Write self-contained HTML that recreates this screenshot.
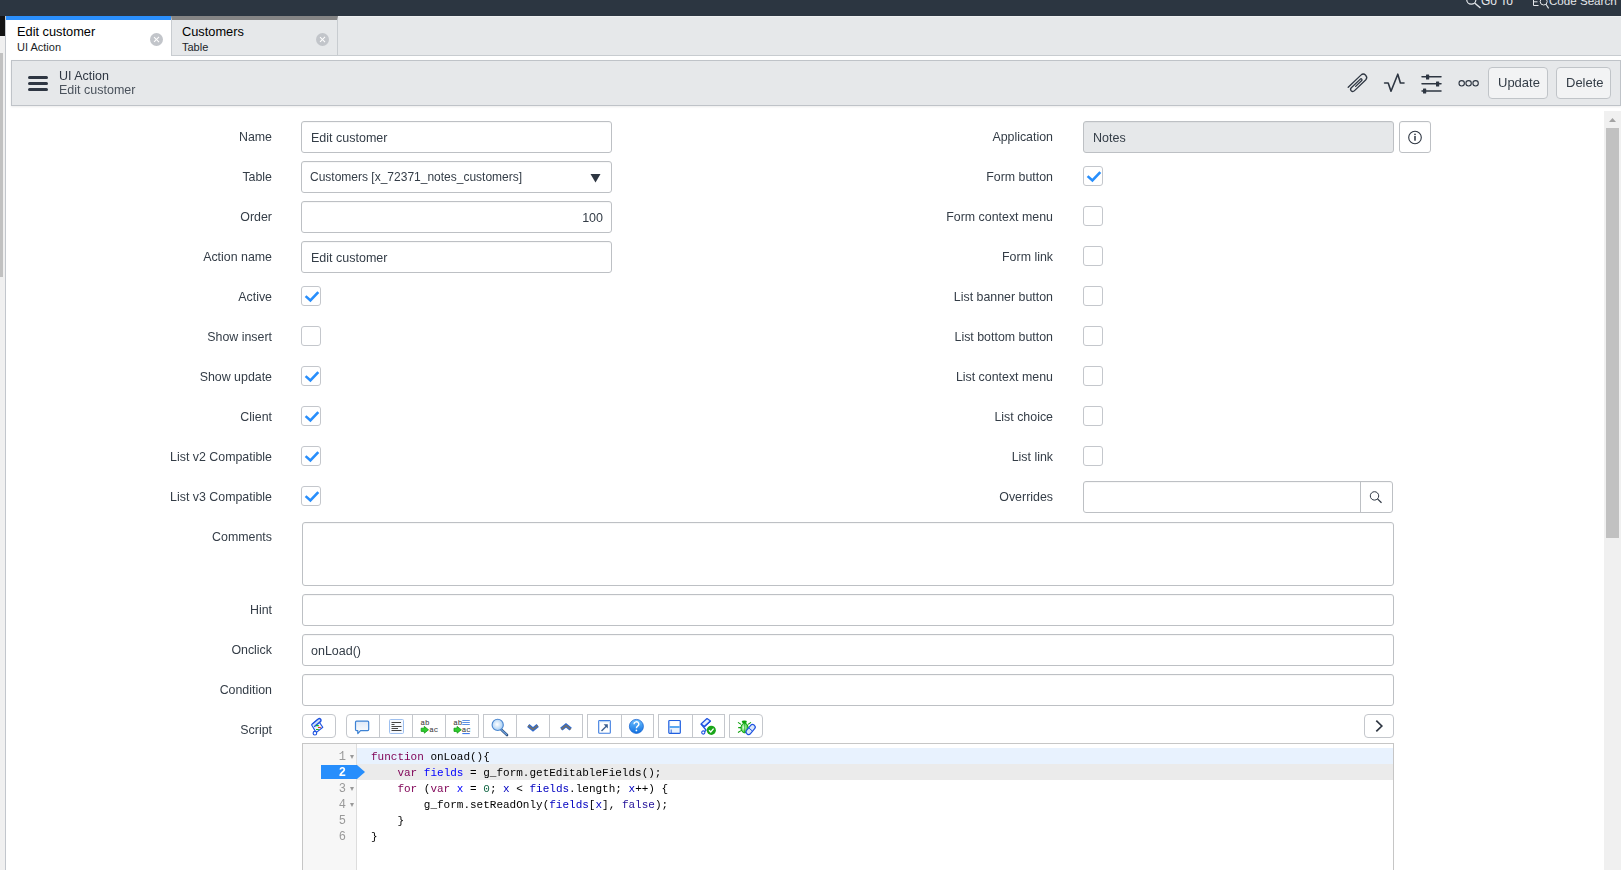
<!DOCTYPE html>
<html><head><meta charset="utf-8">
<style>
*{box-sizing:border-box;margin:0;padding:0}
html,body{width:1621px;height:870px;overflow:hidden;background:#fff;font-family:"Liberation Sans",sans-serif;color:#343d47}
.a{position:absolute}
#topbar{left:0;top:0;width:1621px;height:16px;background:#2c3641}
#leftblk{left:0;top:16px;width:5px;height:20px;background:#141414}
#lefttrack{left:0;top:36px;width:5px;height:834px;background:#f0f0f0}
#leftthumb{left:0;top:53px;width:3px;height:224px;background:#c1c1c1}
#leftline{left:5px;top:16px;width:1px;height:854px;background:#c2c6cc}
#tabbar{left:6px;top:16px;width:1615px;height:40px;background:#e6e8ea;border-bottom:1px solid #c8ccd0;border-top:1px solid #eef0f1}
.tab{top:16px;height:40px}
.tab .t1{position:absolute;left:11px;top:7px;font-size:12.5px;color:#000;white-space:nowrap}
.tab .t2{position:absolute;left:11px;top:24px;font-size:10.5px;color:#1b1f29;white-space:nowrap}
.tab .x{position:absolute;width:13px;height:13px;border-radius:50%;background:#c2c5ca;top:17px}
.tab .x:before,.tab .x:after{content:"";position:absolute;left:6px;top:3px;width:1.3px;height:7px;background:#fff;transform:rotate(45deg)}
.tab .x:after{transform:rotate(-45deg)}
#header{left:11px;top:60px;width:1610px;height:46px;background:#e6e8ea;border:1px solid #bfc3c8;box-shadow:0 1px 2px rgba(0,0,0,.08)}
.lbl{position:absolute;will-change:transform;font-size:12.4px;color:#343d47;white-space:nowrap;text-align:right}
.inp{position:absolute;will-change:transform;height:32px;border:1px solid #bdc0c4;border-radius:3px;background:#fff;box-shadow:inset 0 1px 1px rgba(0,0,0,.035);font-size:12.5px;color:#343d47;white-space:nowrap}
.cb{position:absolute;width:20px;height:20px;border:1px solid #c4c7cc;border-radius:3px;background:#fff}
.btn{position:absolute;will-change:transform;top:7px;height:32px;border:1px solid #c0c4c8;border-radius:4px;background:#f2f3f4;font-size:13px;color:#343d47;white-space:nowrap}
#vscroll{left:1604px;top:111px;width:17px;height:759px;background:#f0f0f0}
#vthumb{left:1606px;top:128px;width:13px;height:410px;background:#c1c1c1}
</style></head><body>
<div class="a" id="topbar"></div>
<div class="a" style="left:1481px;top:-6px;font-size:12px;color:#e4e7ea;white-space:nowrap">Go To</div>
<div class="a" style="left:1549px;top:-6px;font-size:11.6px;color:#e4e7ea;white-space:nowrap">Code Search</div>
<svg class="a" style="left:1460px;top:0" width="100" height="16" viewBox="1460 0 100 16">
 <g fill="none" stroke="#e4e7ea" stroke-width="1.2">
  <circle cx="1471.3" cy="-0.5" r="4.6"/><path d="M1474.6 3 L1480.5 8" stroke-width="1.4"/>
  <path stroke-width="1" d="M1538.5 -2 H1533.5 V5.5 H1538.5 M1533.5 1.8 H1537.5"/>
  <circle cx="1543.7" cy="1.5" r="3.5" stroke-width="1"/><path d="M1546 4.3 L1548.6 8.4" stroke-width="1.1"/>
 </g>
</svg>
<div class="a" id="leftblk"></div>
<div class="a" id="lefttrack"></div>
<div class="a" id="leftthumb"></div>
<div class="a" id="leftline"></div>
<div class="a" id="tabbar"></div>
<!-- tabs -->
<div class="a tab" style="left:6px;width:165px;background:#fff;border-top:4px solid #2b8ffc">
  <div class="t1" style="top:4px;font-size:12.8px">Edit customer</div>
  <div class="t2" style="top:21px;font-size:11px">UI Action</div>
  <div class="x" style="left:144px;top:13px"></div>
</div>
<div class="a tab" style="left:171px;width:167px;background:#e6e8ea;border-top:4px solid #858585;border-left:1px solid #c8ccd0;border-right:1px solid #c8ccd0;border-bottom:1px solid #c8ccd0">
  <div class="t1" style="left:10px;top:4px;font-size:12.8px">Customers</div>
  <div class="t2" style="left:10px;top:21px;font-size:11px">Table</div>
  <div class="x" style="left:144px;top:13px"></div>
</div>
<div class="a" id="header"></div>
<div class="a" style="left:28px;top:76px;width:20px;height:3px;border-radius:1.5px;background:#2e3642"></div>
<div class="a" style="left:28px;top:82px;width:20px;height:3px;border-radius:1.5px;background:#2e3642"></div>
<div class="a" style="left:28px;top:88px;width:20px;height:3px;border-radius:1.5px;background:#2e3642"></div>
<div class="a" style="will-change:transform;left:59px;top:69px;font-size:12.5px;color:#2e3642;white-space:nowrap">UI Action</div>
<div class="a" style="will-change:transform;left:59px;top:83px;font-size:12.5px;color:#4a525c;white-space:nowrap">Edit customer</div>
<svg class="a" style="left:1340px;top:60px" width="150" height="46" viewBox="0 0 150 46">
 <g fill="none" stroke="#2e3642" stroke-width="1.6" stroke-linecap="round" stroke-linejoin="round">
  <path stroke-width="1.3" d="M8.20 27.30 L20.91 15.12 A3.4 3.4 0 0 1 25.61 20.03 L14.28 30.89 A2.15 2.15 0 0 1 11.30 27.79 L20.33 19.14 A1 1 0 0 1 21.71 20.59 L15.65 26.40"/>
  <path d="M44.6 23 H48.2 L51 31.3 L57.8 14.2 L60.4 23 H64"/>
  <path stroke-width="1.5" d="M82 16.8 H101 M82 23.7 H101 M82 31.1 H101"/>
 </g>
 <g fill="#2e3642">
  <rect x="86" y="14.5" width="3.2" height="5" rx="0.5"/>
  <rect x="96" y="21.5" width="3.2" height="5" rx="0.5"/>
  <rect x="83" y="28.5" width="3.2" height="5" rx="0.5"/>
 </g>
 <g fill="none" stroke="#2e3642" stroke-width="1.1">
  <circle cx="121.7" cy="23.3" r="2.7"/><circle cx="128.6" cy="23.3" r="2.7"/><circle cx="135.6" cy="23.3" r="2.7"/>
 </g>
</svg>
<div class="btn" style="left:1488px;top:67px;width:60px;"><span class="a" style="left:9px;top:7px">Update</span></div>
<div class="btn" style="left:1556px;top:67px;width:55px;"><span class="a" style="left:9px;top:7px">Delete</span></div>
<div class="lbl" style="left:0;width:272px;top:130px">Name</div>
<div class="lbl" style="left:0;width:272px;top:170px">Table</div>
<div class="lbl" style="left:0;width:272px;top:210px">Order</div>
<div class="lbl" style="left:0;width:272px;top:250px">Action name</div>
<div class="lbl" style="left:0;width:272px;top:290px">Active</div>
<div class="lbl" style="left:0;width:272px;top:330px">Show insert</div>
<div class="lbl" style="left:0;width:272px;top:370px">Show update</div>
<div class="lbl" style="left:0;width:272px;top:410px">Client</div>
<div class="lbl" style="left:0;width:272px;top:450px">List v2 Compatible</div>
<div class="lbl" style="left:0;width:272px;top:490px">List v3 Compatible</div>
<div class="lbl" style="left:0;width:1053px;top:130px">Application</div>
<div class="lbl" style="left:0;width:1053px;top:170px">Form button</div>
<div class="lbl" style="left:0;width:1053px;top:210px">Form context menu</div>
<div class="lbl" style="left:0;width:1053px;top:250px">Form link</div>
<div class="lbl" style="left:0;width:1053px;top:290px">List banner button</div>
<div class="lbl" style="left:0;width:1053px;top:330px">List bottom button</div>
<div class="lbl" style="left:0;width:1053px;top:370px">List context menu</div>
<div class="lbl" style="left:0;width:1053px;top:410px">List choice</div>
<div class="lbl" style="left:0;width:1053px;top:450px">List link</div>
<div class="lbl" style="left:0;width:1053px;top:490px">Overrides</div>
<div class="inp" style="left:301px;top:121px;width:311px"><span class="a" style="left:9px;top:9px">Edit customer</span></div>
<div class="inp" style="left:301px;top:161px;width:311px"><span class="a" style="left:8px;top:8px;font-size:12px">Customers [x_72371_notes_customers]</span><svg class="a" style="left:287px;top:11px" width="13" height="11"><path d="M1.5 1 H11.5 L6.5 9.5 Z" fill="#2e3642"/></svg></div>
<div class="inp" style="left:301px;top:201px;width:311px"><span class="a" style="right:8px;top:9px">100</span></div>
<div class="inp" style="left:301px;top:241px;width:311px"><span class="a" style="left:9px;top:9px">Edit customer</span></div>
<div class="cb" style="left:301px;top:286px"></div>
<svg class="a" style="left:301px;top:286px" width="20" height="20"><path d="M4.6 10.1 L9.4 14.4 L17.3 6.1" fill="none" stroke="#278efc" stroke-width="2.6"/></svg>
<div class="cb" style="left:301px;top:326px"></div>
<div class="cb" style="left:301px;top:366px"></div>
<svg class="a" style="left:301px;top:366px" width="20" height="20"><path d="M4.6 10.1 L9.4 14.4 L17.3 6.1" fill="none" stroke="#278efc" stroke-width="2.6"/></svg>
<div class="cb" style="left:301px;top:406px"></div>
<svg class="a" style="left:301px;top:406px" width="20" height="20"><path d="M4.6 10.1 L9.4 14.4 L17.3 6.1" fill="none" stroke="#278efc" stroke-width="2.6"/></svg>
<div class="cb" style="left:301px;top:446px"></div>
<svg class="a" style="left:301px;top:446px" width="20" height="20"><path d="M4.6 10.1 L9.4 14.4 L17.3 6.1" fill="none" stroke="#278efc" stroke-width="2.6"/></svg>
<div class="cb" style="left:301px;top:486px"></div>
<svg class="a" style="left:301px;top:486px" width="20" height="20"><path d="M4.6 10.1 L9.4 14.4 L17.3 6.1" fill="none" stroke="#278efc" stroke-width="2.6"/></svg>
<div class="inp" style="left:1083px;top:121px;width:311px;background:#e6e8ea"><span class="a" style="left:9px;top:9px">Notes</span></div>
<div class="inp" style="left:1399px;top:121px;width:32px"><svg class="a" style="left:7px;top:7px" width="18" height="18"><circle cx="8" cy="8.5" r="6.3" fill="none" stroke="#2e3642" stroke-width="1.1"/><rect x="7.25" y="4.7" width="1.5" height="1.4" fill="#2e3642"/><rect x="7.25" y="7" width="1.5" height="4.7" fill="#2e3642"/></svg></div>
<div class="cb" style="left:1083px;top:166px"></div>
<svg class="a" style="left:1083px;top:166px" width="20" height="20"><path d="M4.6 10.1 L9.4 14.4 L17.3 6.1" fill="none" stroke="#278efc" stroke-width="2.6"/></svg>
<div class="cb" style="left:1083px;top:206px"></div>
<div class="cb" style="left:1083px;top:246px"></div>
<div class="cb" style="left:1083px;top:286px"></div>
<div class="cb" style="left:1083px;top:326px"></div>
<div class="cb" style="left:1083px;top:366px"></div>
<div class="cb" style="left:1083px;top:406px"></div>
<div class="cb" style="left:1083px;top:446px"></div>
<div class="inp" style="left:1083px;top:481px;width:310px"><div class="a" style="left:276px;top:0;width:1px;height:30px;background:#bdc0c4"></div><svg class="a" style="left:284px;top:8px" width="16" height="16"><circle cx="6.5" cy="5.9" r="4.2" fill="none" stroke="#2e3642" stroke-width="1"/><path d="M9.5 8.9 L13.5 12.7" stroke="#2e3642" stroke-width="1.2"/></svg></div>
<div class="lbl" style="left:0;width:272px;top:530px">Comments</div>
<div class="inp" style="left:302px;top:522px;width:1092px;height:64px"></div>
<div class="lbl" style="left:0;width:272px;top:603px">Hint</div>
<div class="inp" style="left:302px;top:594px;width:1092px;height:32px"></div>
<div class="lbl" style="left:0;width:272px;top:643px">Onclick</div>
<div class="inp" style="left:302px;top:634px;width:1092px;height:32px"><span class="a" style="left:8px;top:9px">onLoad()</span></div>
<div class="lbl" style="left:0;width:272px;top:683px">Condition</div>
<div class="inp" style="left:302px;top:674px;width:1092px;height:32px"></div>
<div class="lbl" style="left:0;width:272px;top:723px">Script</div>

<!-- script toolbar -->
<style>
.tb{position:absolute;top:714px;height:24px;border:1px solid #c4c7cc;border-radius:3px;background:#fff}
.tbd{position:absolute;top:0;width:1px;height:22px;background:#c4c7cc}
.ed{font-family:"Liberation Mono",monospace;font-size:11px;white-space:pre;line-height:16px}
.kw{color:#7f0055}.v2{color:#0000c0}.df{color:#0000ff}.nm{color:#116644}.at{color:#221199}
.ln{position:absolute;left:0;width:43px;text-align:right;color:#999;font-family:"Liberation Mono",monospace;font-size:12px;line-height:16px}
.fold{position:absolute;left:46.5px;width:0;height:0;border-left:2.5px solid transparent;border-right:2.5px solid transparent;border-top:4px solid #999}
</style>
<div class="tb" style="left:302px;width:34px;border-radius:4px"></div>
<div class="tb" style="left:346px;width:133px;border-radius:4px 0 0 4px"><div class="tbd" style="left:32px"></div><div class="tbd" style="left:65px"></div><div class="tbd" style="left:98px"></div></div>
<div class="tb" style="left:483px;width:100px;border-radius:0"><div class="tbd" style="left:32px"></div><div class="tbd" style="left:65px"></div></div>
<div class="tb" style="left:587px;width:67px;border-radius:0"><div class="tbd" style="left:33px"></div></div>
<div class="tb" style="left:658px;width:67px;border-radius:0"><div class="tbd" style="left:33px"></div></div>
<div class="tb" style="left:729px;width:34px;border-radius:0 4px 4px 0"></div>
<div class="tb" style="left:1364px;width:30px;border-radius:4px"><svg class="a" style="left:0;top:0" width="28" height="22"><path d="M11.3 5.6 L16.8 11 L11.3 16.4" fill="none" stroke="#2e3642" stroke-width="1.7"/></svg></div>

<!-- toolbar icons -->
<svg class="a" style="left:300px;top:712px" width="480" height="28" viewBox="300 712 480 28">
 <defs>
  <linearGradient id="gb" x1="0" y1="0" x2="0" y2="1"><stop offset="0" stop-color="#dfe9f7"/><stop offset="1" stop-color="#ffffff"/></linearGradient>
  <radialGradient id="gm" cx="0.45" cy="0.45" r="0.6"><stop offset="0" stop-color="#ffffff"/><stop offset="1" stop-color="#9cc8f2"/></radialGradient>
  <linearGradient id="gh" x1="0" y1="0" x2="0" y2="1"><stop offset="0" stop-color="#6cc0ff"/><stop offset="1" stop-color="#0f6fe0"/></linearGradient>
  <radialGradient id="gbug" cx="0.4" cy="0.45" r="0.6"><stop offset="0" stop-color="#e8ffe8"/><stop offset="1" stop-color="#19c019"/></radialGradient>
 </defs>
 <!-- scroll icon 1 -->
 <path d="M311.5 724.8 L317.5 719.6 L322.8 727.2 L316.2 732.6 Z" fill="#eef3fd" stroke="#1d52e0" stroke-width="1.1" stroke-linejoin="round"/>
 <path d="M312 724.2 L318.2 719 A1.6 1.6 0 0 1 320.4 721.6 L314.2 726.8" fill="#cfdffa" stroke="#1d52e0" stroke-width="1.4" stroke-linejoin="round"/>
 <path d="M316.2 732.6 L314 734.4" stroke="#1d52e0" stroke-width="1.2"/>
 <circle cx="314.9" cy="733.2" r="1.8" fill="#fff" stroke="#1d52e0" stroke-width="1.1"/>
 <path d="M316 725.6 H318.8 M316 729.5 H318.8" stroke="#18b818" stroke-width="1.1"/>
 <path d="M318 727.5 H320.8" stroke="#e53a1a" stroke-width="1.1"/>
 <!-- comment bubble -->
 <path d="M356.5 721.2 H367.7 A1 1 0 0 1 368.7 722.2 V729.6 A1 1 0 0 1 367.7 730.6 H360.5 L357.8 733.6 V730.6 H356.5 A1 1 0 0 1 355.5 729.6 V722.2 A1 1 0 0 1 356.5 721.2 Z" fill="url(#gb)" stroke="#3d82d4" stroke-width="1.2" stroke-linejoin="round"/>
 <!-- align text icon -->
 <rect x="389.5" y="719.5" width="14" height="14" rx="1" fill="#f6f9fe" stroke="#9ec0f0" stroke-width="1"/>
 <path d="M391.5 722.5 H401 M391.5 724.5 H394.5 M391.5 726.5 H401.5 M391.5 728.5 H398 M391.5 730.5 H401.5" stroke="#444" stroke-width="1"/>
 <!-- replace -->
 <g font-family="Liberation Mono,monospace" font-size="7.5" fill="#333">
  <text x="420.5" y="724.8">ab</text><text x="429.3" y="731.8">ac</text>
  <text x="453.3" y="724.8">ab</text><text x="461.8" y="731.8">ac</text>
 </g>
 <path d="M421.2 728.2 H424.3 V726.4 L428.5 729.8 L424.3 733.2 V731.4 H421.2 Z" fill="#2fce2f" stroke="#0f9a0f" stroke-width="0.8"/>
 <path d="M454 728.2 H457.1 V726.4 L461.3 729.8 L457.1 733.2 V731.4 H454 Z" fill="#2fce2f" stroke="#0f9a0f" stroke-width="0.8"/>
 <path d="M462.3 720.5 H469.8 M462.3 722.5 H469.8 M462.3 724.5 H469.8" stroke="#4a86e0" stroke-width="0.9"/>
 <path d="M462.3 733.6 H469.8" stroke="#2e6fe8" stroke-width="1"/>
 <!-- magnifier -->
 <path d="M501.3 729.6 L507 735" stroke="#2e4e78" stroke-width="2.6" stroke-linecap="round"/>
 <path d="M501.3 729.6 L506.5 734.5" stroke="#6a9fe0" stroke-width="1.3" stroke-linecap="round"/>
 <circle cx="497.7" cy="724.9" r="5.6" fill="url(#gm)" stroke="#4a86d0" stroke-width="1.1"/>
 <!-- chevrons -->
 <path d="M528.3 725.5 L533 729.4 L537.7 725.5" fill="none" stroke="#2a6ad8" stroke-width="3.6" stroke-linejoin="miter"/>
 <path d="M528.3 725.5 L533 729.4 L537.7 725.5" fill="none" stroke="#707070" stroke-width="1.8" stroke-linejoin="miter"/>
 <path d="M561.3 729.2 L566 725.3 L570.7 729.2" fill="none" stroke="#2a6ad8" stroke-width="3.6" stroke-linejoin="miter"/>
 <path d="M561.3 729.2 L566 725.3 L570.7 729.2" fill="none" stroke="#707070" stroke-width="1.8" stroke-linejoin="miter"/>
 <!-- fullscreen -->
 <rect x="598.7" y="720.5" width="11.6" height="12.8" rx="0.8" fill="#fff" stroke="#3b7be0" stroke-width="1.1"/>
 <path d="M599.3 721.6 H609.7" stroke="#b8d4f4" stroke-width="1.2"/>
 <path d="M601.5 731 L606.8 725.7" stroke="#3a5f90" stroke-width="1.4"/>
 <path d="M603.6 724.3 H607.8 V728.5 Z" fill="#3a5f90"/>
 <!-- help -->
 <circle cx="636.4" cy="726.4" r="7" fill="url(#gh)" stroke="#1763d0" stroke-width="0.8"/>
 <path d="M634 724.2 A2.4 2.3 0 1 1 637.6 726.1 Q636.4 726.9 636.4 728.2" fill="none" stroke="#fff" stroke-width="1.4"/>
 <circle cx="636.4" cy="730.4" r="0.85" fill="#fff"/>
 <!-- floppy -->
 <rect x="668.8" y="720.5" width="11.5" height="12.8" rx="0.8" fill="#e9f2fc" stroke="#1f5fe0" stroke-width="1.2"/>
 <rect x="670.3" y="721.4" width="8.6" height="4.6" fill="#ffffff"/>
 <rect x="669.4" y="726" width="10.4" height="2" fill="#5aa8f0"/>
 <path d="M671.2 729.5 V733" stroke="#1f5fe0" stroke-width="0.9"/>
 <!-- scroll with check -->
 <g transform="translate(705.5,726)">
  <path d="M-4.5 -2 L1.5 -7.5 L5 -5 L-1 0.5 Z" fill="#e6eefc" stroke="#1d52e0" stroke-width="1.2" stroke-linejoin="round"/>
  <path d="M-4.5 -2 L0.5 4 L-2 7 M-1 0.5 L5 -5" fill="none" stroke="#1d52e0" stroke-width="1.2" stroke-linejoin="round"/>
  <circle cx="-2.2" cy="6.5" r="1.6" fill="#fff" stroke="#1d52e0" stroke-width="1.1"/>
 </g>
 <circle cx="711.3" cy="730.3" r="4.6" fill="#1aa51a"/>
 <path d="M709 730.2 L710.8 732 L713.6 728.6" fill="none" stroke="#fff" stroke-width="1.3"/>
 <!-- bug -->
 <ellipse cx="744.6" cy="728" rx="3.6" ry="4.8" fill="url(#gbug)" stroke="#0aa00a" stroke-width="1"/>
 <ellipse cx="744.3" cy="721.8" rx="2.6" ry="1.4" fill="#0aa00a"/>
 <path d="M744.6 723.5 V732.5" stroke="#0aa00a" stroke-width="0.6"/>
 <path d="M738 722.4 L741 724.4 M751 722.4 L748 724.4 M738.2 727.6 H741 M738 732.5 L741 730.6" stroke="#0aa00a" stroke-width="1.1"/>
 <g transform="translate(750.6,729.5) rotate(40)">
  <rect x="-2.6" y="-5.6" width="5.2" height="11.2" rx="2.4" fill="#dbe7fa" stroke="#1d52e0" stroke-width="1.2"/>
  <path d="M-2 0 H2" stroke="#1d52e0" stroke-width="0.9"/>
 </g>
</svg>
<!-- editor -->
<div class="a" style="will-change:transform;left:302px;top:743px;width:1092px;height:140px;border:1px solid #c6c6c6;background:#fff;overflow:hidden">
  <div class="a" style="left:0;top:0;width:54px;height:140px;background:#f7f7f7;border-right:1px solid #dddddd"></div>
  <div class="a" style="left:54px;top:4px;width:1040px;height:16px;background:#e8f2fe"></div>
  <div class="a" style="left:54px;top:20px;width:1040px;height:16px;background:#ebebeb"></div>
  <svg class="a" style="left:18px;top:21px" width="45" height="15"><path d="M0 0 H36 L44 7 L36 14 H0 Z" fill="#278efc"/></svg>
  <div class="ln" style="top:5px">1</div><div class="fold" style="top:11px"></div>
  <div class="ln" style="top:21px;color:#fff;font-weight:bold">2</div>
  <div class="ln" style="top:37px">3</div><div class="fold" style="top:43px"></div>
  <div class="ln" style="top:53px">4</div><div class="fold" style="top:59px"></div>
  <div class="ln" style="top:69px">5</div>
  <div class="ln" style="top:85px">6</div>
  <div class="a ed" style="left:68px;top:5px;color:#000"><span class="kw">function</span> onLoad(){
    <span class="kw">var</span> <span class="df">fields</span> = g_form.getEditableFields();
    <span class="kw">for</span> (<span class="kw">var</span> <span class="df">x</span> = <span class="nm">0</span>; <span class="v2">x</span> &lt; <span class="v2">fields</span>.length; <span class="v2">x</span>++) {
        g_form.setReadOnly(<span class="v2">fields</span>[<span class="v2">x</span>], <span class="at">false</span>);
    }
}</div>
</div>
<div class="a" id="vscroll"></div>
<div class="a" id="vthumb"></div>
<svg class="a" style="left:1604px;top:111px" width="17" height="17"><path d="M5 11 L8.5 7 L12 11 Z" fill="#a3a3a3"/></svg>
</body></html>
